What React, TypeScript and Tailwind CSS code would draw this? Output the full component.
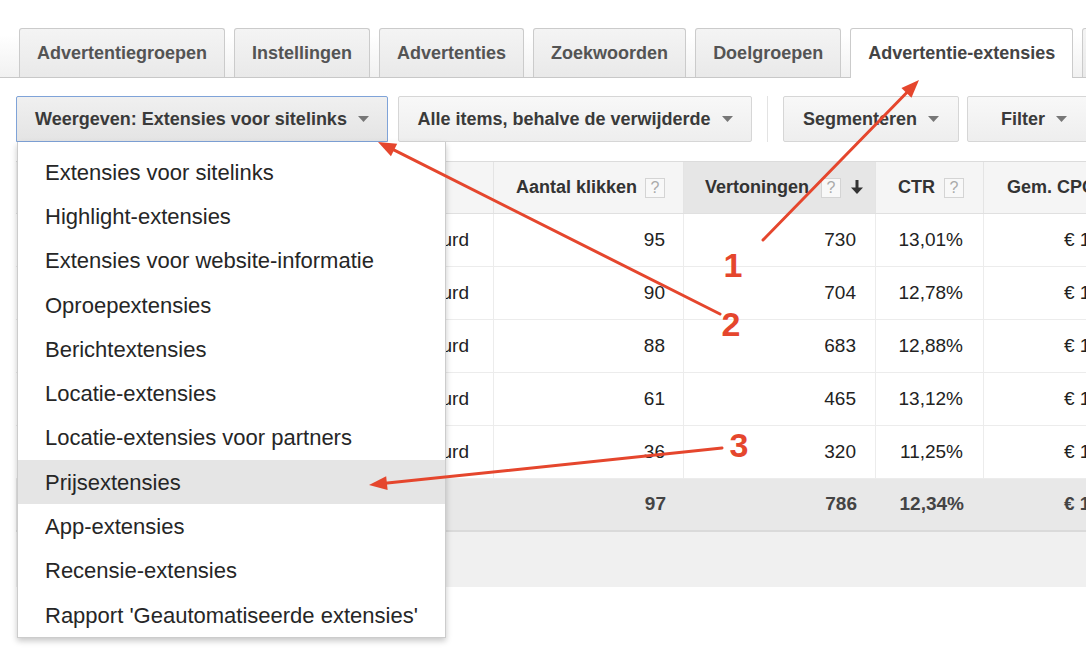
import React from "react";

const FONT = { fontFamily: '"Liberation Sans", Arial, Helvetica, sans-serif' };

const tabs = ["Advertentiegroepen", "Instellingen", "Advertenties", "Zoekwoorden", "Doelgroepen"];

const menuItems = [
  "Extensies voor sitelinks",
  "Highlight-extensies",
  "Extensies voor website-informatie",
  "Oproepextensies",
  "Berichtextensies",
  "Locatie-extensies",
  "Locatie-extensies voor partners",
  "Prijsextensies",
  "App-extensies",
  "Recensie-extensies",
  "Rapport 'Geautomatiseerde extensies'",
];

const rows = [
  ["95", "730", "13,01%", "€ 1,12"],
  ["90", "704", "12,78%", "€ 1,08"],
  ["88", "683", "12,88%", "€ 1,15"],
  ["61", "465", "13,12%", "€ 1,10"],
  ["36", "320", "11,25%", "€ 1,19"],
];

function Caret() {
  return (
    <svg width="11" height="6" viewBox="0 0 11 6" className="shrink-0">
      <path d="M0 0h11L5.5 6z" fill="#777" />
    </svg>
  );
}

function Help() {
  return (
    <span className="inline-flex h-[20px] w-[20px] shrink-0 items-center justify-center border border-[#d4d4d4] bg-[#f8f8f8] text-[16px] font-normal leading-none text-[#aaa]">
      ?
    </span>
  );
}

function SortDown() {
  return (
    <svg width="14" height="15" viewBox="0 0 14 15" className="shrink-0">
      <rect x="5.5" y="0" width="3" height="9" fill="#333" />
      <path d="M1 7.5h12L7 14z" fill="#333" />
    </svg>
  );
}

function arrow(x1: number, y1: number, x2: number, y2: number) {
  const dx = x2 - x1;
  const dy = y2 - y1;
  const L = Math.hypot(dx, dy);
  const ux = dx / L;
  const uy = dy / L;
  const hl = 18;
  const hw = 7;
  const bx = x2 - ux * hl;
  const by = y2 - uy * hl;
  const nx = -uy;
  const ny = ux;
  return {
    line: { x1, y1, x2: bx + ux * 2, y2: by + uy * 2 },
    poly: `${x2},${y2} ${bx + nx * hw},${by + ny * hw} ${bx - nx * hw},${by - ny * hw}`,
  };
}

const arrows = [arrow(763, 240, 919, 80), arrow(720, 314, 378, 142), arrow(722, 448, 369, 485)];

const cols = "grid grid-cols-[334px_144px_190px_192px_108px_160px]";

const btn =
  "flex shrink-0 items-center justify-center gap-[11px] whitespace-nowrap rounded-[2px] border border-[#d6d6d6] bg-gradient-to-b from-[#f8f8f8] to-[#eeeeee] text-[18px] font-bold text-[#3a3a3a]";

export default function App() {
  return (
    <div className="relative h-[648px] w-[1086px] overflow-hidden bg-white" style={FONT}>
      {/* Tabs */}
      <div className="flex gap-[9px] border-b border-[#c8c8c8] bg-gradient-to-b from-white from-[45%] to-[#f1f1f1] pl-[19px] pt-[28px]">
        {tabs.map((t) => (
          <div
            key={t}
            className="flex h-[49px] shrink-0 items-center whitespace-nowrap rounded-t-[3px] border border-b-0 border-[#cbcbcb] bg-gradient-to-b from-[#f4f4f4] to-[#e9e9e9] px-[17px] text-[18px] font-bold text-[#545454]"
          >
            {t}
          </div>
        ))}
        <div className="relative -mb-px flex h-[50px] shrink-0 items-center whitespace-nowrap rounded-t-[3px] border border-b-0 border-[#cbcbcb] bg-white px-[17px] pb-px text-[18px] font-bold text-[#444]">
          Advertentie-extensies
        </div>
        <div className="h-[49px] w-[40px] shrink-0 rounded-t-[3px] border border-b-0 border-[#cbcbcb] bg-gradient-to-b from-[#f4f4f4] to-[#e9e9e9]" />
      </div>

      {/* Toolbar */}
      <div className="ml-[16px] mt-[18px] flex h-[46px] items-stretch">
        <div className="flex w-[372px] shrink-0 items-center justify-center gap-[11px] whitespace-nowrap rounded-t-[2px] border border-[#7fa3d8] bg-gradient-to-b from-[#f0f0f0] to-[#e4e4e4] text-[18px] font-bold text-[#3a3a3a]">
          <span>Weergeven: Extensies voor sitelinks</span>
          <Caret />
        </div>
        <div className={`${btn} ml-[10px] w-[354px]`}>
          <span>Alle items, behalve de verwijderde</span>
          <Caret />
        </div>
        <div className="mx-[15px] w-px shrink-0 bg-[#e3e3e3]" />
        <div className={`${btn} w-[176px]`}>
          <span>Segmenteren</span>
          <Caret />
        </div>
        <div className={`${btn} ml-[8px] w-[134px]`}>
          <span>Filter</span>
          <Caret />
        </div>
      </div>

      {/* Table */}
      <div className="ml-[16px] mt-[19px] w-[1128px] border-t border-[#dcdcdc]">
        <div className={`${cols} h-[52px] border-b border-[#e0e0e0] bg-[#f5f5f5] text-[18px] font-bold text-[#333]`}>
          <div className="border-r border-[#e4e4e4]" />
          <div className="border-r border-[#e4e4e4]" />
          <div className="flex items-center justify-end gap-[8px] border-r border-[#e4e4e4] pr-[18px]">
            <span>Aantal klikken</span>
            <Help />
          </div>
          <div className="flex items-center justify-end border-r border-[#e4e4e4] bg-[#e6e6e6] pr-[11px]">
            <span>Vertoningen</span>
            <span className="ml-[12px]"><Help /></span>
            <span className="ml-[9px]"><SortDown /></span>
          </div>
          <div className="flex items-center justify-end gap-[9px] border-r border-[#e4e4e4] pr-[19px]">
            <span>CTR</span>
            <Help />
          </div>
          <div className="flex items-center whitespace-nowrap pl-[23px]">
            <span>Gem. CPC</span>
          </div>
        </div>
        {rows.map((r, i) => (
          <div key={i} className={`${cols} h-[53px] border-b border-[#ececec] bg-white text-[19px] text-[#222]`}>
            <div className="border-r border-[#ececec]" />
            <div className="flex items-center justify-end border-r border-[#ececec] pr-[24px]">Goedgekeurd</div>
            <div className="flex items-center justify-end border-r border-[#ececec] pr-[18px]">{r[0]}</div>
            <div className="flex items-center justify-end border-r border-[#ececec] pr-[19px]">{r[1]}</div>
            <div className="flex items-center justify-end border-r border-[#ececec] pr-[20px]">{r[2]}</div>
            <div className="flex items-center whitespace-nowrap pl-[80px]">{r[3]}</div>
          </div>
        ))}
        <div className={`${cols} h-[53px] border-b-2 border-[#dadada] bg-[#e8e8e8] text-[19px] font-bold text-[#444]`}>
          <div />
          <div />
          <div className="flex items-center justify-end pr-[18px]">97</div>
          <div className="flex items-center justify-end pr-[19px]">786</div>
          <div className="flex items-center justify-end pr-[20px]">12,34%</div>
          <div className="flex items-center whitespace-nowrap pl-[80px]">€ 1,11</div>
        </div>
        <div className="h-[55px] bg-[#f0f0f0]" />
      </div>

      {/* Dropdown menu */}
      <div className="absolute left-[17px] top-[142px] z-10 w-[429px] border border-t-0 border-[#cccccc] bg-white pt-[8px] shadow-[0_3px_6px_rgba(0,0,0,0.22)]">
        {menuItems.map((m) => (
          <div
            key={m}
            className={`flex h-[44.3px] items-center whitespace-nowrap pl-[27px] text-[22px] text-[#262626] ${
              m === "Prijsextensies" ? "bg-[#e5e5e5]" : ""
            }`}
          >
            {m}
          </div>
        ))}
      </div>

      {/* Annotations */}
      <svg className="pointer-events-none absolute inset-0 z-20" width="1086" height="648" viewBox="0 0 1086 648">
        {arrows.map((a, i) => (
          <g key={i}>
            <line {...a.line} stroke="#e5462d" strokeWidth="3" strokeLinecap="round" />
            <polygon points={a.poly} fill="#e5462d" />
          </g>
        ))}
        <g fill="#e5462d" fontWeight="bold" fontSize="34" textAnchor="middle" style={FONT}>
          <text x="733" y="277">1</text>
          <text x="731" y="336">2</text>
          <text x="739" y="457">3</text>
        </g>
      </svg>
    </div>
  );
}
